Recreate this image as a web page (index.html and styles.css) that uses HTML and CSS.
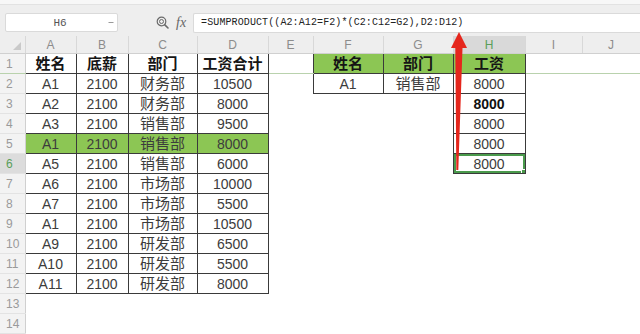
FILE: index.html
```html
<!DOCTYPE html>
<html lang="zh">
<head>
<meta charset="utf-8">
<link rel="stylesheet" href="styles.css">
</head>
<body>
<div class="topstrip"></div>
<div class="toolbar">
  <div class="namebox"><span class="nb-text">H6</span><svg class="nb-arrow" width="6" height="4" viewBox="0 0 6 4"><path d="M0.5 1.5h5" stroke="#9a9a9a" stroke-width="1"/></svg></div>
  <svg class="lens" width="13" height="13" viewBox="0 0 13 13"><circle cx="5.5" cy="5.5" r="4.3" fill="none" stroke="#6a6a6a" stroke-width="1.2"/><circle cx="5.5" cy="5.5" r="2" fill="none" stroke="#6a6a6a" stroke-width="1"/><path d="M8.6 8.6l3.4 3.4" stroke="#6a6a6a" stroke-width="1.6" stroke-linecap="round"/></svg>
  <span class="fx">fx</span>
  <div class="formula">=SUMPRODUCT((A2:A12=F2)*(C2:C12=G2),D2:D12)</div>
</div>
<table class="sheet">
  <colgroup>
    <col class="w-rh"><col class="w-a"><col class="w-b"><col class="w-c"><col class="w-d"><col class="w-e"><col class="w-f"><col class="w-g"><col class="w-h"><col class="w-i"><col class="w-j">
  </colgroup>
  <tr class="hdr">
    <th class="corner"><svg width="8" height="8" viewBox="0 0 8 8"><path d="M8 0V8H0Z" fill="#c9c9c9"/></svg></th>
    <th>A</th><th>B</th><th>C</th><th>D</th><th>E</th><th>F</th><th>G</th><th class="sel">H</th><th>I</th><th>J</th>
  </tr>
  <tr>
    <td class="rh frz">1</td>
    <td class="b hd zh">姓名</td><td class="b hd zh">底薪</td><td class="b hd zh">部门</td><td class="b hd zh">工资合计</td>
    <td class="frz"></td>
    <td class="b hd zh gr">姓名</td><td class="b hd zh gr">部门</td><td class="b hd zh gr">工资</td>
    <td class="frz"></td><td class="frz"></td>
  </tr>
  <tr>
    <td class="rh">2</td>
    <td class="b">A1</td><td class="b">2100</td><td class="b zh">财务部</td><td class="b">10500</td>
    <td></td>
    <td class="b">A1</td><td class="b zh">销售部</td><td class="b">8000</td>
    <td></td><td></td>
  </tr>
  <tr>
    <td class="rh">3</td>
    <td class="b">A2</td><td class="b">2100</td><td class="b zh">财务部</td><td class="b">8000</td>
    <td></td><td></td><td></td>
    <td class="b strong">8000</td>
    <td></td><td></td>
  </tr>
  <tr>
    <td class="rh">4</td>
    <td class="b">A3</td><td class="b">2100</td><td class="b zh">销售部</td><td class="b">9500</td>
    <td></td><td></td><td></td>
    <td class="b">8000</td>
    <td></td><td></td>
  </tr>
  <tr>
    <td class="rh">5</td>
    <td class="b gr">A1</td><td class="b gr">2100</td><td class="b zh gr">销售部</td><td class="b gr">8000</td>
    <td></td><td></td><td></td>
    <td class="b">8000</td>
    <td></td><td></td>
  </tr>
  <tr>
    <td class="rh rsel">6</td>
    <td class="b">A5</td><td class="b">2100</td><td class="b zh">销售部</td><td class="b">6000</td>
    <td></td><td></td><td></td>
    <td class="b active">8000</td>
    <td></td><td></td>
  </tr>
  <tr>
    <td class="rh">7</td>
    <td class="b">A6</td><td class="b">2100</td><td class="b zh">市场部</td><td class="b">10000</td>
    <td></td><td></td><td></td><td></td><td></td><td></td>
  </tr>
  <tr>
    <td class="rh">8</td>
    <td class="b">A7</td><td class="b">2100</td><td class="b zh">市场部</td><td class="b">5500</td>
    <td></td><td></td><td></td><td></td><td></td><td></td>
  </tr>
  <tr>
    <td class="rh">9</td>
    <td class="b">A1</td><td class="b">2100</td><td class="b zh">市场部</td><td class="b">10500</td>
    <td></td><td></td><td></td><td></td><td></td><td></td>
  </tr>
  <tr>
    <td class="rh">10</td>
    <td class="b">A9</td><td class="b">2100</td><td class="b zh">研发部</td><td class="b">6500</td>
    <td></td><td></td><td></td><td></td><td></td><td></td>
  </tr>
  <tr>
    <td class="rh">11</td>
    <td class="b">A10</td><td class="b">2100</td><td class="b zh">研发部</td><td class="b">5500</td>
    <td></td><td></td><td></td><td></td><td></td><td></td>
  </tr>
  <tr>
    <td class="rh">12</td>
    <td class="b">A11</td><td class="b">2100</td><td class="b zh">研发部</td><td class="b">8000</td>
    <td></td><td></td><td></td><td></td><td></td><td></td>
  </tr>
  <tr>
    <td class="rh">13</td>
    <td></td><td></td><td></td><td></td><td></td><td></td><td></td><td></td><td></td><td></td>
  </tr>
  <tr>
    <td class="rh">14</td>
    <td></td><td></td><td></td><td></td><td></td><td></td><td></td><td></td><td></td><td></td>
  </tr>
</table>
<svg class="arrow" width="20" height="142" viewBox="448 30 20 142">
  <polygon points="459,32 467,48 462.5,48 458.3,170 456.3,170 455.3,48 451,48" fill="#e5261c"/>
</svg>
</body>
</html>
```
FILE: styles.css
```css
html, body {
  margin: 0;
  padding: 0;
}
body {
  width: 640px;
  height: 334px;
  overflow: hidden;
  background: #ffffff;
  font-family: "Liberation Sans", "Noto Sans CJK SC", sans-serif;
  position: relative;
}
.topstrip {
  height: 4px;
  background: #f7f7f7;
  border-bottom: 1px solid #e2e2e2;
}
.toolbar {
  height: 31px;
  box-sizing: border-box;
  background: #eeeeee;
  display: flex;
  align-items: center;
  padding-top: 4px;
}
.namebox {
  margin-left: 5px;
  width: 113px;
  height: 19px;
  box-sizing: border-box;
  background: #ffffff;
  border: 1px solid #dadada;
  border-radius: 2px;
  display: flex;
  align-items: center;
}
.nb-text {
  flex: 1;
  text-align: center;
  font-family: "Liberation Mono", monospace;
  font-size: 11px;
  color: #555555;
  padding-left: 6px;
}
.nb-arrow {
  margin-right: 3px;
}
.lens {
  margin-left: 38px;
}
.fx {
  margin-left: 7px;
  font-family: "Liberation Serif", serif;
  font-style: italic;
  font-size: 14px;
  color: #666666;
  line-height: 1;
}
.formula {
  margin-left: 7px;
  flex: 1;
  height: 20px;
  box-sizing: border-box;
  background: #ffffff;
  border: 1px solid #dadada;
  border-right: none;
  border-radius: 2px 0 0 2px;
  padding-left: 7px;
  font-family: "Liberation Mono", monospace;
  font-size: 10px;
  letter-spacing: 0.1px;
  line-height: 18px;
  color: #222222;
  white-space: nowrap;
}
.sheet {
  border-collapse: collapse;
  table-layout: fixed;
  width: 640px;
}
.w-rh { width: 25px; }
.w-a { width: 51px; }
.w-b { width: 52px; }
.w-c { width: 69px; }
.w-d { width: 71px; }
.w-e { width: 45px; }
.w-f { width: 70px; }
.w-g { width: 70px; }
.w-h { width: 72px; }
.w-i { width: 57px; }
.w-j { width: 58px; }
.hdr th {
  height: 17px;
  padding: 0;
  background: #eeeeee;
  border-right: 1px solid #d8d8d8;
  border-bottom: 1px solid #d0d0d0;
  font-weight: normal;
  font-size: 12px;
  line-height: 14px;
  color: #8c8c8c;
  text-align: center;
  vertical-align: middle;
}
.hdr th.corner {
  text-align: right;
  padding-right: 4px;
  vertical-align: bottom;
  line-height: 0;
}
.hdr th.corner svg {
  margin-bottom: 3px;
}
.hdr th.sel {
  background: #d9d9d9;
  color: #5a9e5a;
}
td {
  height: 19px;
  padding: 0;
  text-align: center;
  vertical-align: middle;
  font-size: 14px;
  line-height: 16px;
  color: #3c3c3c;
  white-space: nowrap;
  overflow: hidden;
}
td.rh {
  background: #f3f3f3;
  border-right: 1px solid #d0d0d0;
  border-bottom: 1px solid #e3e3e3;
  text-align: left;
  padding-left: 6px;
  font-size: 12px;
  color: #9a9a9a;
}
td.rsel {
  background: #dcdcdc;
  color: #5a9e5a;
}
td.frz {
  border-bottom: 1px solid #b9d2ad;
}
td.b {
  border: 1px solid #3a3a3a;
}
td.zh {
  font-size: 15px;
}
td.hd {
  font-weight: bold;
  color: #151515;
}
td.gr {
  background: #8cc654;
}
td.strong {
  font-weight: bold;
  color: #111111;
}
td.active {
  position: relative;
  box-shadow: inset 0 0 0 2px #4a9a4c;
}
td.active::after {
  content: "";
  position: absolute;
  right: -2px;
  bottom: -2px;
  width: 4px;
  height: 4px;
  background: #4a9a4c;
  border: 1px solid #ffffff;
}
.arrow {
  position: absolute;
  left: 448px;
  top: 30px;
}
```
